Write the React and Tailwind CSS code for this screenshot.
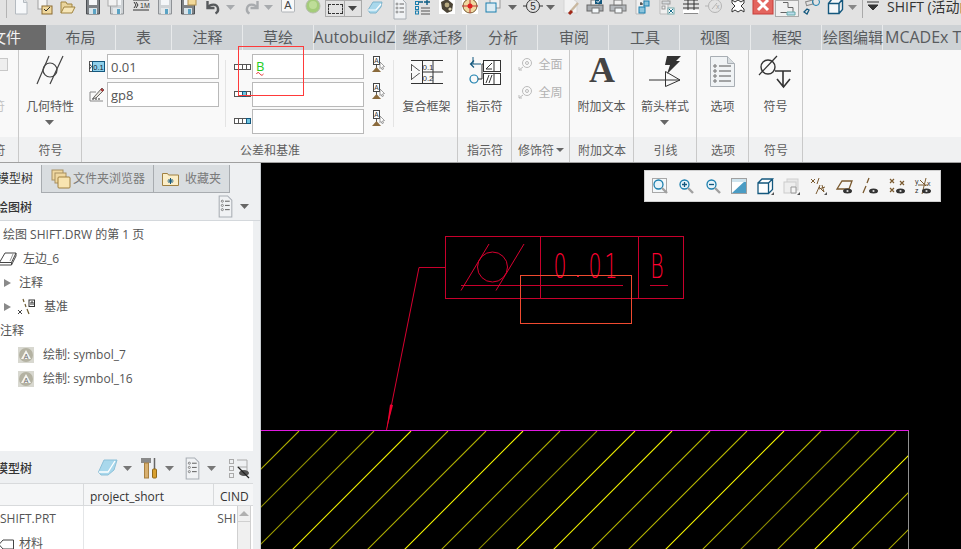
import React from "react";

const S = ({ w = 16, h = 16, vb, className = "", children }) => (
  <svg width={w} height={h} viewBox={vb || `0 0 ${w} ${h}`} className={`block shrink-0 overflow-visible ${className}`}>{children}</svg>
);

const Arrow = ({ c = "#777", className = "" }) => (
  <S className={className}><path d="M3 5h9l-4.500 5z" fill={c} /></S>
);
const DocI = () => <S><path d="M2.500-1h8l3.500 3.500V14h-11.500z" fill="#f6f8fa" stroke="#b4bac0" /><path d="M10.500-1v3.500h3.500" fill="#dfe3e6" stroke="#b4bac0" /></S>;
const Floppy = ({ faded, extra }) => (
  <S>
    <path d="M1.500-1h13v15h-13z" fill={faded ? "#cfd3d6" : "#7e8286"} stroke={faded ? "#8e9296" : "#4c5054"} />
    <rect x="4" y="-1" width="8" height="6" fill="#f4f6f8" />
    <rect x="4" y="8" width="8" height="6" fill={faded ? "#e4e8ea" : "#d8e4ea"} />
    <rect x="8" y="9" width="3" height="5" fill="#5ba3c4" />
    {extra}
  </S>
);
const UndoI = ({ c = "#56595c" }) => <S><path d="M2.500 1v7h7M3 7.500c2-3.500 9-4.500 10 1 .4 2-.6 4-2.500 5" fill="none" stroke={c} strokeWidth="2.400" /></S>;
const RedoI = () => <S><g transform="matrix(-1 0 0 1 16 0)"><path d="M2.500 1v7h7M3 7.500c2-3.500 9-4.500 10 1 .4 2-.6 4-2.500 5" fill="none" stroke="#a8abae" strokeWidth="2.400" /></g></S>;
const Eraser = () => <S><path d="M1 10 6 2h9l-1 5-5 6H3z" fill="#a9d8ec" stroke="#7fb4cc" /><path d="M1 10h8l5-6" fill="none" stroke="#fff" strokeWidth="1.200" /></S>;
const ListI = ({ big }) => (
  <S w={big ? 17 : 16} h={big ? 20 : 16} vb={big ? "0 0 16 19" : "0 0 16 16"}>
    <path d="M2-1h8l4 4v16h-12z" fill="#f0f2f4" stroke="#a8aeb4" />
    {[4, 8, 12].map((y) => (
      <g key={y}><circle cx="5" cy={y} r="1" fill="none" stroke="#666" strokeWidth=".7" /><path d={`M7.500 ${y}h4.500`} stroke="#666" /></g>
    ))}
  </S>
);
const BlueList = () => <S><g fill="none" stroke="#1b7fae"><rect x="1.500" y="1.500" width="3" height="3" /><rect x="1.500" y="6.500" width="3" height="3" /><rect x="1.500" y="11" width="3" height="3" /></g><path d="M7 8h9M7 11h9M7 14h9" stroke="#555" /><path d="M5 2h4M13 0v5M10 2h6" stroke="#0d5c84" strokeWidth="1.400" /></S>;
const Mech = () => <S><rect x="0" y="-1" width="16" height="15" fill="#fff" /><path d="M2 2l6-3 6 5-1 7-5 2-5-4z" fill="#4b4436" /><circle cx="8" cy="5" r="2.400" fill="#b8aa80" /><circle cx="11" cy="9" r="1.600" fill="#d8d0b0" /></S>;
const Target = () => <S><rect x="0" y="-1" width="16" height="15" fill="#fff" /><circle cx="8" cy="6" r="7" fill="#f0d8a0" stroke="#7a5a30" /><path d="M0 6h16M8-1v14" stroke="#c03030" /><circle cx="8" cy="6" r="2.500" fill="#e02020" /></S>;

const Q = ({ className = "", children }) => <div className={`w-4 h-4 shrink-0 ${className}`}>{children}</div>;

function QuickBar() {
  return (
    <div className="h-[25px] bg-[#e2e2e2] flex items-start pl-[13px] relative overflow-hidden shrink-0">
      <div className="absolute left-[6px] top-0 h-[18px] w-px bg-[#b4b4b4]" />
      <Q><DocI /></Q>
      <Q className="ml-[8px]"><S><rect x="1" y="-1" width="9" height="10" fill="#f4f4f4" stroke="#a0a0a0" /><rect x="5" y="6" width="10" height="8" fill="#f0d89c" stroke="#8a6a30" /><path d="M7 9l2 2 4-4" fill="none" stroke="#333" /></S></Q>
      <Q className="ml-[7px]"><S><path d="M1 13V2h5l1 2h5v3" fill="#e9d49c" stroke="#a08440" /><path d="M1 13l3-6h11l-3 6z" fill="#f6e6b8" stroke="#a08440" /></S></Q>
      <Q className="ml-[9px]"><Floppy /></Q>
      <Q className="ml-[8px]"><Floppy faded extra={<rect x="-1" y="-2" width="9" height="8" fill="#f2f2f2" stroke="#aaa" />} /></Q>
      <Q className="ml-[8px]"><S><path d="M0 0h16M0 10h16" stroke="#333" strokeWidth="1.200" /><path d="M1 2l2 3-2 3M3 2l2 3-2 3" fill="none" stroke="#333" /><text x="7" y="8" fontSize="7" fill="#333" fontFamily="Liberation Sans">1M</text></S></Q>
      <Q className="ml-[8px]"><Floppy faded /></Q>
      <Q className="ml-[7px]"><Floppy extra={<rect x="8" y="-3" width="8" height="8" fill="#f2d99a" stroke="#b09050" />} /></Q>
      <Q className="ml-[9px]"><UndoI /></Q>
      <Q className="ml-[2px]"><Arrow c="#a8abae" /></Q>
      <Q className="ml-[5px]"><RedoI /></Q>
      <Q className="ml-[1px]"><Arrow c="#a8abae" /></Q>
      <Q className="ml-[3px]"><S><rect x="1.500" y="-2" width="13" height="14" rx="1" fill="#f8f8f8" stroke="#b0b4b8" /><text x="8" y="9" textAnchor="middle" fontSize="11" fill="#444" fontFamily="Liberation Sans">A</text></S></Q>
      <Q className="ml-[9px]"><S><circle cx="8" cy="6" r="7" fill="#a4cc7a" stroke="#b4bdaa" /><circle cx="8" cy="5" r="4" fill="#bedd98" /></S></Q>
      <div className="ml-[4px] w-[37px] h-[17px] border border-[#aaaaaa] flex shrink-0">
        <div className="w-[23px] border-r border-[#aaaaaa] flex items-center justify-center">
          <div className="w-[15px] h-[10px] border border-dashed border-[#333333]" />
        </div>
        <div className="flex-1 flex items-center justify-center"><Arrow c="#444" /></div>
      </div>
      <Q className="ml-[5px]"><Eraser /></Q>
      <Q className="ml-[9px]"><ListI /></Q>
      <Q className="ml-[6px]"><BlueList /></Q>
      <Q className="ml-[9px]"><Mech /></Q>
      <Q className="ml-[7px]"><Target /></Q>
      <Q className="ml-[7px]"><S><rect x="5" y="-1" width="10" height="9" fill="#eee" stroke="#999" /><rect x="1" y="3" width="10" height="9" fill="#dcebf2" stroke="#1b7fae" /></S></Q>
      <Q className="ml-[4px]"><Arrow c="#666" /></Q>
      <Q className="ml-[4px]"><S><circle cx="8" cy="6" r="6.500" fill="none" stroke="#333" /><path d="M-2 6h3M15 6h3" stroke="#333" /><text x="8" y="9.500" textAnchor="middle" fontSize="10" fill="#333" fontFamily="Liberation Sans">5</text></S></Q>
      <Q className="ml-[2px]"><Arrow c="#666" /></Q>
      <Q className="ml-[4px]"><S><path d="M1-1h9l4 3v11H1z" fill="#f2f2f2" stroke="#d4d4d4" /><path d="M7 12l8-9" stroke="#c9b8a0" strokeWidth="2.400" /><path d="M6 14l3-3" stroke="#a02818" strokeWidth="3" /></S></Q>
      <Q className="ml-[8px]"><S><rect x="0" y="5" width="16" height="6" fill="#a8acb0" stroke="#666" /><rect x="4" y="0" width="8" height="5" fill="#f0f0f0" stroke="#777" /><rect x="5" y="8" width="7" height="5" fill="#f4f8fa" stroke="#777" /><rect x="8" y="-2" width="7" height="6" fill="#14587e" /><path d="M9.500 1l1.500 1.500 2.500-3" fill="none" stroke="#fff" /></S></Q>
      <Q className="ml-[7px]"><S><rect x="0" y="5" width="16" height="6" fill="#b4b8bc" stroke="#777" /><rect x="4" y="0" width="8" height="5" fill="#f0f0f0" stroke="#777" /><rect x="5" y="8" width="7" height="5" fill="#f4f8fa" stroke="#777" /></S></Q>
      <Q className="ml-[9px]"><S><path d="M1-1h8v15H1z" fill="#f0f0f0" stroke="#bbb" /><rect x="9" y="1" width="5" height="5" fill="#8cc4dc" stroke="#1b7fae" /><rect x="4" y="7" width="6" height="6" fill="#8cc4dc" stroke="#1b7fae" /><path d="M5 4h3M6 2v3" stroke="#222" /></S></Q>
      <Q className="ml-[8px]"><S><path d="M1-1h8v15H1z" fill="#f0f0f0" stroke="#bbb" /><rect x="3" y="1" width="8" height="3" fill="#d8dcdf" stroke="#999" /><rect x="3" y="6" width="3" height="3" fill="none" stroke="#999" /><rect x="9" y="8" width="6" height="6" fill="#fff" stroke="#7aa" /><path d="M10 9l4 4M14 9l-4 4" stroke="#1b6f8e" /></S></Q>
      <Q className="ml-[8px]"><S><path d="M1 0h14M1 13h14M0 4h16M0 8h16" stroke="#333" /><path d="M5-1v11M11-1v11" stroke="#333" /><rect x="0" y="10" width="16" height="3" fill="#fff" /></S></Q>
      <Q className="ml-[8px]"><S><circle cx="8" cy="6" r="6.500" fill="none" stroke="#b4b4b4" /><path d="M-2 6h3M5 9l5-6" stroke="#b4b4b4" /><text x="9" y="9" fontSize="7" fill="#aaa" fontFamily="Liberation Sans">x</text></S></Q>
      <Q className="ml-[7px]"><S><path d="M2 0l3 2 3-2 3 2 3-2v3l-3 3 3 3v3l-3-2-3 2-3-2-3 2V9l3-3-3-3z" fill="#fff" stroke="#333" /></S></Q>
      <Q className="ml-[9px]"><S><rect x="-2" y="-3" width="20" height="17" fill="#e3655e" stroke="#c83c38" /><path d="M3 0l10 10M13 0L3 10" stroke="#fff" strokeWidth="3" /></S></Q>
      <div className="ml-[4px] w-[24px] h-[17px] border border-[#aaaaaa] bg-[#f0f0f0] shrink-0 flex items-center justify-center">
        <S w={17} h={14}><path d="M4 .5h5v5h5v5H1.500" fill="none" stroke="#666" /><path d="M8 10h8v3H8z" fill="#bcdcec" stroke="#6aa" /></S>
      </div>
      <Q className="ml-[5px]"><S><rect x="2" y="1" width="7" height="4" fill="none" stroke="#888" transform="rotate(-15 5 3)" /><circle cx="12" cy="2" r="3.500" fill="none" stroke="#1b7fae" /><path d="M0 12l3-3 2 1-2 4z" fill="none" stroke="#14587e" strokeWidth="1.300" /></S></Q>
      <Q className="ml-[7px]"><S w={17} h={16}><path d="M1.500 3.500H12v10H1.500zM1.500 3.500 5-1h10.500L12 3.500M12 13.500l3.500-4V-1" fill="#f4f8fa" stroke="#14587e" strokeWidth="1.400" /></S></Q>
      <Q className="ml-[2px]"><Arrow c="#888" /></Q>
      <div className="ml-[1px] mt-0 h-[18px] w-px bg-[#aaaaaa] shrink-0" />
      <Q className="ml-[2px]"><S><path d="M2 2h12M3 5h10l-5 5z" fill="#333" stroke="#333" /></S></Q>
      <span className="ml-[6px] text-[14px] leading-[13px] text-[#333333] whitespace-nowrap">SHIFT (活动的)</span>
    </div>
  );
}

const TABS = [
  ["布局", "w-[70px]", ""], ["表", "w-[56px]", ""], ["注释", "w-[71px]", "pl-px"], ["草绘", "w-[71px]", ""],
  ["AutobuildZ", "w-[82px]", "text-[16px]"], ["继承迁移", "w-[71px]", "pl-[3px]"], ["分析", "w-[71px]", "pl-[2px]"], ["审阅", "w-[71px]", "pl-[2px]"],
  ["工具", "w-[71px]", "pl-[2px]"], ["视图", "w-[71px]", ""], ["框架", "w-[71px]", "pl-[2px]"], ["绘图编辑", "w-[61px]", "pl-[2px]"],
];

function Tabs() {
  return (
    <div className="h-[25px] bg-[#ced2d5] flex shrink-0 overflow-hidden whitespace-nowrap text-[15px] leading-[24px] text-[#585b5e]">
      <div className="w-[46px] bg-[#6b6b6b] text-[#f4f4f4] pl-[21px] shrink-0 flex justify-end pr-[25px]"><span>文件</span></div>
      {TABS.map(([t, w, p]) => (
        <div key={t} className={`${w} ${p} shrink-0 flex justify-center border-r border-[#e8eaeb]`}><span className="shrink-0">{t}</span></div>
      ))}
      <div className="pl-[2px] text-[16px] shrink-0">MCADEx Toolkit</div>
    </div>
  );
}

const Group = ({ w, label, caret, children }) => (
  <div className={`${w} shrink-0 flex flex-col border-r border-[#c9c9c9] overflow-hidden`}>
    <div className="h-[87px] relative flex flex-col items-center">{children}</div>
    <div className="h-[25px] pt-[2px] pl-px bg-[#f0f1f2] flex items-center justify-center text-[12px] text-[#5e5e5e] whitespace-nowrap">
      {label}
      {caret && <span className="ml-[2px] mt-[-2px] w-0 h-0 border-x-[4px] border-x-transparent border-t-[4px] border-t-[#666666]" />}
    </div>
  </div>
);

const BigBtn = ({ icon, text, caret }) => (
  <>
    <div className="h-[48px] w-full flex items-start justify-center pt-[6px] shrink-0">{icon}</div>
    <div className="h-[17px] leading-[17px] text-[12px] text-[#555555] whitespace-nowrap">{text}</div>
    {caret && <Arrow c="#666" />}
  </>
);

const Field = ({ children, w = "w-[112px]" }) => (
  <div className={`${w} h-[25px] bg-white border border-[#b9b9b9] px-[3px] text-[13px] leading-[24px] text-[#555555] relative shrink-0`}>{children}</div>
);

const Seg = ({ hi }) => (
  <S w={16} h={7}>
    {[0, 1, 2, 3].map((i) => (
      <rect key={i} x={i * 4 + 0.5} y="0.500" width="4" height="5" fill={i === hi ? "#6ec4e0" : "#fff"} stroke={i === hi ? "#14587e" : "#555"} />
    ))}
  </S>
);

const DatumPick = () => (
  <S w={13} h={17} className="ml-[8px] mb-[6px]">
    <rect x="1.500" y=".5" width="6" height="8" fill="#fff" stroke="#444" />
    <text x="4.500" y="7" fontSize="6.500" textAnchor="middle" fill="#333" fontFamily="Liberation Sans">A</text>
    <path d="M4.500 9v3" stroke="#555" />
    <path d="M4.500 11 9 16H0z" fill="#8a6a3c" />
    <path d="M8 6l4.500 4.500-2 .5 1 2-1.500.5-1-2L8 12.500z" fill="#fff" stroke="#777" strokeWidth=".7" />
  </S>
);

const Tolerance = () => (
  <div className="absolute inset-0 flex items-start">
    <div className="w-[143px] pl-[7px] pt-[4px] flex flex-col gap-[3px] shrink-0">
      <div className="flex items-center gap-[2px]">
        <S w={16} h={11}>
          <rect x=".5" y=".5" width="15" height="10" fill="#fff" stroke="#555" />
          <rect x="3.500" y=".5" width="12" height="10" fill="#8fd0ea" stroke="#14587e" />
          <path d="M.5 3l2 2.500-2 2.500" fill="none" stroke="#333" />
          <text x="9.500" y="8.500" fontSize="7.500" textAnchor="middle" fill="#123" fontFamily="Liberation Sans">0.1</text>
        </S>
        <Field>0.01</Field>
      </div>
      <div className="flex items-center gap-[2px]">
        <S w={16} h={15}>
          <path d="M1 14V5h6M1 14h13" fill="none" stroke="#888" />
          <path d="M3 12h9" stroke="#333" strokeDasharray="2 1" />
          <path d="M5 10 13 1l2 2-8 8-3 .5z" fill="#e8e4dc" stroke="#666" />
          <path d="M12 2l2 2" stroke="#b03030" strokeWidth="2" />
        </S>
        <Field>gp8</Field>
      </div>
    </div>
    <div className="w-px h-[67px] bg-[#e4e4e4] mt-[10px] shrink-0" />
    <div className="w-[168px] pl-[8px] pt-[4px] flex flex-col gap-[2px] shrink-0">
      {[0, 2, 3].map((hi, i) => (
        <div key={i} className="flex items-center">
          <Seg hi={i === 0 ? -1 : hi} />
          <div className={i === 0 ? "ml-[2px] mb-[1px]" : "ml-[2px]"}>
            <Field>
              {i === 0 && (
                <span className="relative block text-[#22cc22] text-[13px] mt-[-1px]">
                  B
                  <svg width="8" height="4" className="absolute left-0 top-[18px]"><path d="M.5 2c1-2 2-2 3.500 0s2.500 1 3.500 0" fill="none" stroke="#e02020" /></svg>
                </span>
              )}
            </Field>
          </div>
          <DatumPick />
        </div>
      ))}
    </div>
    <div className="w-px h-[67px] bg-[#e4e4e4] mt-[10px] ml-[-1px] shrink-0" />
    <div className="flex-1 flex flex-col items-center pl-[2px]">
      <div className="h-[48px] w-full flex items-start justify-center pt-[10px]">
        <S w={32} h={24}>
          <path d="M0 .5h32M0 23.500h32M0 12h32" stroke="#333" fill="none" />
          <path d="M11.500 0v24M22 0v24" stroke="#333" />
          <path d="M.5 4v16M1 5l9 7-9 7" fill="none" stroke="#555" />
          <rect x="0" y="11" width="11" height="2" fill="#f9f9f9" />
          <text x="17" y="10" fontSize="8" textAnchor="middle" fill="#333" fontFamily="Liberation Sans">0.1</text>
          <text x="17" y="21" fontSize="8" textAnchor="middle" fill="#333" fontFamily="Liberation Sans">0.2</text>
        </S>
      </div>
      <div className="h-[17px] leading-[17px] text-[12px] text-[#555555] whitespace-nowrap">复合框架</div>
    </div>
  </div>
);

const Modifier = ({ t, top }) => (
  <div className={`flex items-center gap-[6px] ${top}`}>
    <S w={14} h={14}>
      <circle cx="9" cy="6" r="4.500" fill="none" stroke="#bbb" />
      <circle cx="9" cy="6" r="1.500" fill="none" stroke="#bbb" />
      <path d="M5 10l-4 3M1 10v3h3" fill="none" stroke="#bbb" />
    </S>
    <span className="text-[12px] text-[#b2b2b2] leading-none pt-[1px]">{t}</span>
  </div>
);

function Ribbon() {
  return (
    <div className="h-[112px] bg-[#f9f9f9] flex shrink-0 text-[12px] overflow-hidden">
      <Group w="w-[19px]" label={<span className="ml-[-44px]">注释符</span>}>
        <div className="absolute left-[-8px] top-[8px] w-4 h-[13px] border border-[#c8c8c8] bg-[#eeeeee]" />
        <span className="absolute left-[-19px] top-[48px] text-[#c2c2c2] text-[12px] whitespace-nowrap">符符</span>
      </Group>
      <Group w="w-[63px]" label="符号">
        <BigBtn
          text="几何特性"
          caret
          icon={
            <S w={28} h={28}>
              <circle cx="14" cy="14" r="7" fill="none" stroke="#444" strokeWidth="1.200" />
              <path d="M1 28 13 0M14 28 27 0" stroke="#444" strokeWidth="1.200" />
            </S>
          }
        />
      </Group>
      <Group w="w-[376px]" label="公差和基准">
        <Tolerance />
      </Group>
      <Group w="w-[54px]" label="指示符">
        <BigBtn
          text="指示符"
          icon={
            <S w={32} h={29} className="mt-[1px]">
              <path d="M12 7H2M5 3.500 1.500 7 5 10.500" fill="none" stroke="#14587e" strokeWidth="1.200" />
              <path d="M4 7V0" stroke="#14587e" />
              <circle cx="5" cy="22" r="4" fill="none" stroke="#1b7fae" strokeWidth="1.200" />
              <path d="M9 22h4V7h6" fill="none" stroke="#333" />
              <rect x="14.500" y="3.500" width="17" height="11" fill="#fff" stroke="#333" />
              <path d="M25 3.500v11M17 12l6-6M17 12h6" fill="none" stroke="#333" />
              <rect x="14.500" y="16.500" width="17" height="11" fill="#fff" stroke="#333" />
              <path d="M25 16.500v11M17 26l3-8M20 26l3-8" fill="none" stroke="#333" />
            </S>
          }
        />
      </Group>
      <Group w="w-[58px]" label="修饰符" caret>
        <Modifier t="全面" top="mt-[7px]" />
        <Modifier t="全周" top="mt-[14px]" />
      </Group>
      <Group w="w-[64px]" label="附加文本">
        <div className="h-[48px] w-full flex justify-center pl-px">
          <span className="font-['Liberation_Serif',serif] font-bold text-[36px] leading-[40px] text-[#444444]">A</span>
        </div>
        <div className="h-[17px] leading-[17px] text-[12px] text-[#555555] whitespace-nowrap">附加文本</div>
      </Group>
      <Group w="w-[63px]" label="引线">
        <BigBtn
          text="箭头样式"
          caret
          icon={
            <S w={32} h={32}>
              <path d="M18 0h14l-5 5h4L18 18l3-9h-5z" fill="#333" />
              <path d="M0 24h31" stroke="#333" />
              <path d="M16.500 15.500v15L31 24z" fill="none" stroke="#333" />
            </S>
          }
        />
      </Group>
      <Group w="w-[52px]" label="选项">
        <BigBtn
          text="选项"
          icon={
            <S w={25} h={31}>
              <path d="M.5.500h17l7 7v23H.5z" fill="#f0f3f5" stroke="#a8aeb4" />
              <path d="M17.500.500v7h7" fill="#d8dde0" stroke="#a8aeb4" />
              {[10, 15, 20, 25].map((y) => (
                <g key={y}><circle cx="5" cy={y} r="1.200" fill="none" stroke="#666" /><path d={`M9 ${y}h12`} stroke="#555" /></g>
              ))}
            </S>
          }
        />
      </Group>
      <Group w="w-[54px]" label="符号">
        <BigBtn
          text="符号"
          icon={
            <S w={33} h={32}>
              <circle cx="9" cy="11" r="7" fill="none" stroke="#333" strokeWidth="1.400" />
              <path d="M0 19 18 0" stroke="#333" strokeWidth="1.200" />
              <path d="M16 15h16M24 15v16M18 23l6.500 8 6.500-8" fill="none" stroke="#333" strokeWidth="1.600" />
            </S>
          }
        />
      </Group>
      <div className="flex-1 flex flex-col">
        <div className="h-[87px]" />
        <div className="h-[25px] bg-[#f0f1f2]" />
      </div>
    </div>
  );
}

const NoteI = () => (
  <S w={16} h={16}>
    <rect width="16" height="16" fill="#d8d8d0" />
    <circle cx="8" cy="8" r="7" fill="#b4b2a2" />
    <path d="M3 12 8 3l5 9z" fill="#f4f4f0" />
    <text x="8" y="12" fontSize="7" textAnchor="middle" fill="#666" fontFamily="Liberation Sans">A</text>
  </S>
);

const Tri = () => <div className="w-0 h-0 border-y-[4.500px] border-y-transparent border-l-[7px] border-l-[#8a8a8a] shrink-0" />;

const Row = ({ className = "", children }) => (
  <div className={`h-6 pt-[3px] flex items-center text-[12px] text-[#555555] whitespace-nowrap shrink-0 ${className}`}>{children}</div>
);

function Sidebar() {
  return (
    <div className="w-[261px] shrink-0 bg-[#eef0f2] border-r border-[#c8ccd0] flex flex-col overflow-hidden">
      <div className="h-[30px] pt-[2px] flex shrink-0 text-[12px] text-[#7a7a7a] border-b-0">
        <div className="w-[42px] shrink-0 bg-[#eef0f2] border-r border-[#a8acb0] flex items-center justify-end pr-[8px] text-[#333333]"><span className="shrink-0">模型树</span></div>
        <div className="w-[112px] shrink-0 bg-[#d9dde0] border-r border-b border-[#a8acb0] flex items-center pl-[9px] gap-[2px]">
          <S w={20} h={20}>
            <rect x="1" y="1" width="11" height="10" fill="#f0d8a0" stroke="#a89060" />
            <rect x="4" y="4" width="11" height="10" fill="#f0d8a0" stroke="#a89060" />
            <rect x="7" y="8" width="12" height="11" rx="1" fill="#f8e4b0" stroke="#a08040" />
          </S>
          <span>文件夹浏览器</span>
        </div>
        <div className="w-[76px] shrink-0 bg-[#d9dde0] border-r border-b border-[#a8acb0] flex items-center pl-[8px] gap-[6px]">
          <S w={17} h={15}>
            <path d="M.5 14.500V2.500h5l1 1.500h10v10.500z" fill="#fbeec8" stroke="#a08040" />
            <path d="M8.500 7v6M5.500 10h6M6.500 8l4 4M10.500 8l-4 4" stroke="#14587e" />
          </S>
          <span>收藏夹</span>
        </div>
        <div className="flex-1 border-b border-transparent" />
      </div>
      <div className="h-[28px] pt-[3px] shrink-0 flex items-center border-b border-[#d4d8dc] text-[12px] text-[#333333] relative">
        <span className="ml-[-4px] font-medium">绘图树</span>
        <div className="absolute left-[217px] top-[4px]"><ListI big /></div>
        <div className="absolute left-[237px] top-[6px]"><Arrow c="#666" /></div>
      </div>
      <div className="h-[230px] shrink-0 flex flex-col w-[253px] bg-white overflow-hidden">
        <Row className="pl-[3px]">绘图 SHIFT.DRW 的第 1 页</Row>
        <Row>
          <S w={18} h={14} className="ml-[-1px] mr-[6px]">
            <path d="M.5 10.500 6 1h11l-4.500 9.500zM.5 10.500V13h12l4.500-9V1M12.500 10.500V13" fill="none" stroke="#444" />
            <path d="M14 2l-3 7" stroke="#999" />
          </S>
          左边_6
        </Row>
        <Row className="pl-[4px]"><Tri /><span className="ml-[8px]">注释</span></Row>
        <Row className="pl-[4px]">
          <Tri />
          <S w={17} h={16} className="ml-[7px] mr-[9px]">
            <path d="M5 0l1 3M7 5l1 3M9 10l2 5" stroke="#6b5a30" strokeWidth="1.200" />
            <path d="M0 11l4 4M4 11l-4 4" stroke="#444" />
            <rect x="11" y="1" width="5.500" height="6.500" fill="#fff" stroke="#333" />
            <path d="M13 6V3h2v3" fill="none" stroke="#333" />
          </S>
          基准
        </Row>
        <Row className="pl-0">注释</Row>
        <Row className="pl-[18px]"><NoteI /><span className="ml-[9px]">绘制: symbol_7</span></Row>
        <Row className="pl-[18px]"><NoteI /><span className="ml-[9px]">绘制: symbol_16</span></Row>
      </div>
      <div className="h-[32px] pt-[3px] shrink-0 flex items-center relative text-[12px] text-[#333333]">
        <span className="ml-[-4px] font-medium">模型树</span>
        <div className="absolute left-[98px] top-[8px]"><S w={20} h={17}><path d="M.5 13 6 1h13l-3 10-6 5H3z" fill="#a9d8ec" stroke="#8cc0d8" /><path d="M1 13h9l7-11" fill="none" stroke="#fff" strokeWidth="1.300" /></S></div>
        <div className="absolute left-[120px] top-[10px]"><Arrow c="#777" /></div>
        <div className="absolute left-[141px] top-[7px]">
          <S w={17} h={21}>
            <path d="M0 0h10v5H0z" fill="#8a8a8a" />
            <rect x="3.500" y="5" width="4" height="15" fill="#d8b070" stroke="#a88040" />
            <path d="M13.500 0v11" stroke="#666" strokeWidth="1.500" />
            <rect x="11.500" y="11" width="4" height="9" rx="1" fill="#d8a030" stroke="#906818" />
          </S>
        </div>
        <div className="absolute left-[162px] top-[10px]"><Arrow c="#777" /></div>
        <div className="absolute left-[184px] top-[8px]"><ListI big /></div>
        <div className="absolute left-[204px] top-[10px]"><Arrow c="#777" /></div>
        <div className="absolute left-[229px] top-[8px]">
          <S w={20} h={20}>
            <g fill="none" stroke="#aaa"><rect x=".5" y=".5" width="4" height="4" /><rect x=".5" y="7.500" width="4" height="4" /><rect x=".5" y="14.500" width="4" height="4" /><path d="M8 1h10M8 8h10M18 1v12" /></g>
            <ellipse cx="15" cy="14" rx="5" ry="3" fill="#555" />
            <path d="M9 8l11 11" stroke="#222" strokeWidth="1.300" />
          </S>
        </div>
      </div>
      <div className="h-[23px] shrink-0 w-[253px] bg-[#f5f6f7] border-y border-[#d8dadc] flex text-[12px] text-[#333333] whitespace-nowrap">
        <div className="w-[84px] border-r border-[#d8dadc] shrink-0" />
        <div className="w-[130px] border-r border-[#d8dadc] pl-[6px] leading-[25px] shrink-0">project_short</div>
        <div className="pl-[6px] leading-[25px] overflow-hidden">CIND</div>
      </div>
      <div className="flex-1 w-[253px] bg-white flex text-[12px] text-[#555555] whitespace-nowrap overflow-hidden">
        <div className="w-[84px] border-r border-[#e4e6e8] shrink-0 flex flex-col">
          <div className="h-[24px] leading-[26px]">SHIFT.PRT</div>
          <div className="flex items-center h-[24px] mt-[5px]">
            <S w={15} h={11} className="ml-[-1px] mr-[5px]"><path d="M0 5.500 4 1h10.500v9H4z" fill="#fff" stroke="#444" /></S>
            材料
          </div>
        </div>
        <div className="w-[129px] shrink-0" />
        <div className="w-[24px] shrink-0 text-right pr-px overflow-hidden leading-[26px]">SHI</div>
        <div className="w-[14px] shrink-0 ml-[0px] bg-[#f0f0f0] border-x border-[#d0d0d0] h-full">
          <div className="h-[16px] flex items-center justify-center border-b border-[#d0d0d0]"><span className="w-0 h-0 border-x-[5px] border-x-transparent border-b-[5px] border-b-[#b0b0b0]" /></div>
        </div>
      </div>
    </div>
  );
}

const MAG = () => (
  <>
    <circle cx="6.500" cy="6.500" r="4.500" fill="#e8f4fa" stroke="#1b7fae" strokeWidth="1.300" />
    <path d="M10 10l5 5" stroke="#a0a0a0" strokeWidth="2.400" />
  </>
);

const EYE = () => (
  <g>
    <ellipse cx="11.500" cy="13" rx="4.500" ry="2.500" fill="#333" />
    <circle cx="11.500" cy="13" r="1.100" fill="#ddd" />
  </g>
);
const Corner = () => <path d="M17 17h-3l3-3z" fill="#555" />;

function FloatBar() {
  const cls = "ml-[10.300px] shrink-0";
  return (
    <div className="absolute left-[383px] top-[7px] w-[297px] h-[32px] bg-[#f5f5f5] border border-[#cfcfcf] flex items-center pl-[7px]">
      <S className="shrink-0"><rect x=".5" y=".5" width="14" height="14" fill="#f4f8fa" stroke="#a8a8a8" /><MAG /></S>
      <S className={cls}><MAG /><path d="M4 6.500h5M6.500 4v5" stroke="#14587e" strokeWidth="1.300" /></S>
      <S className={cls}><MAG /><path d="M4 6.500h5" stroke="#14587e" strokeWidth="1.300" /></S>
      <S className={cls}><rect x=".5" y=".5" width="15" height="15" fill="#fff" stroke="#a0a0a0" /><path d="M1 15 15 2v13z" fill="#4a9cc4" /><path d="M1 1h14v3H1z" fill="#cfe4ee" /></S>
      <S className={cls}><path d="M1 5h10.500v10.500H1zM1 5l4-4h10.500L11.500 5M11.500 15.500l4-4V1" fill="#fff" stroke="#14587e" strokeWidth="1.300" /><Corner /></S>
      <S className={cls}><rect x="4" y="1" width="11" height="11" fill="#e8e8e8" stroke="#d0d0d0" /><rect x="1" y="4" width="12" height="11" fill="#eee" stroke="#ccc" /><path d="M8 9h5v6H8z" fill="#f4f4f4" stroke="#999" /><Corner /></S>
      <S className={cls}><g stroke="#7a5a30" fill="none"><path d="M1 1l4 4M5 1L1 5M9 0 7 6M10 7 6 16M12 7l2 7M9 11l6-2M9 9l5 5" /></g><Corner /></S>
      <S className={cls}><path d="M1 11 6 3h10l-3 8z" fill="none" stroke="#7a5a30" strokeWidth="1.300" /><EYE /></S>
      <S className={cls}><path d="M7 0 5 5M4 8l-3 7" stroke="#7a5a30" strokeWidth="1.300" /><EYE /></S>
      <S className={cls}><path d="M1 1l4 4M5 1L1 5M11 3l4 4M15 3l-4 4M1 10l4 4M5 10l-4 4" stroke="#7a5a30" strokeWidth="1.200" /><EYE /></S>
      <S className={cls}><path d="M11 0 7 16M3 7l10 0M5 2l6 6" stroke="#7a5a30" /><text x="0" y="6" fontSize="7" fill="#333" fontFamily="Liberation Sans">y</text><text x="0" y="15" fontSize="7" fill="#333" fontFamily="Liberation Sans">z</text><text x="12" y="8" fontSize="7" fill="#333" fontFamily="Liberation Sans">x</text><EYE /></S>
    </div>
  );
}

const HATCH = [
  [299, "#b0b000"], [337, "#909000"], [374, "#a0a000"], [411, "#f0f000"], [448, "#b0b000"], [486, "#b0b000"],
  [523, "#f8f800"], [560, "#b0b000"], [597, "#909000"], [635, "#e8e800"], [672, "#f0f000"], [710, "#b8b800"],
  [747, "#b8b800"], [784, "#f8f800"], [821, "#b8b800"], [859, "#909000"], [896, "#a8a800"], [933, "#f8f800"],
  [970, "#b8b800"], [1007, "#a8a800"],
];

const RED = "#c8002c";
const Glyph = ({ x, t }) => (
  <text x={0} y={0} transform={`translate(${x} 278) scale(0.62 1)`} textAnchor="middle" fontSize="33" fontWeight="200" fill="#ff0030" fontFamily="DejaVu Sans">{t}</text>
);

function Drawing() {
  return (
    <svg width="700" height="386" viewBox="261 163 700 386" className="absolute inset-0 block">
      <defs>
        <clipPath id="hatch"><rect x="261" y="431" width="647" height="118" /></clipPath>
      </defs>
      <g clipPath="url(#hatch)">
        {HATCH.map(([x, c]) => (
          <line key={x} x1={x} y1="431" x2={x - 300} y2="731" stroke={c} strokeWidth="1.100" />
        ))}
      </g>
      <path d="M261 430.500H908.500" stroke="#e018e0" shapeRendering="crispEdges" />
      <path d="M908.500 431V549" stroke="#909090" shapeRendering="crispEdges" />
      <g fill="none" stroke={RED} shapeRendering="crispEdges">
        <rect x="445.500" y="236.500" width="238" height="62" />
        <path d="M540.500 236.500v62M638.500 236.500v62" />
        <path d="M461 285.500h162M650 285.500h18" />
        <path d="M445 267.500h-26.500" />
      </g>
      <g fill="none" stroke="#d80030">
        <circle cx="492.500" cy="267" r="15" />
        <path d="M461 290.500 489 244M496 290.500 524 244" />
        <path d="M419 267.500 386.500 430" />
      </g>
      <path d="M386.500 430 390 404.500 393 405z" fill="#f00030" />
      <Glyph x={560} t="0" />
      <rect x="577" y="275" width="2" height="2" fill="#f00030" />
      <Glyph x={595} t="0" />
      <Glyph x={611} t="1" />
      <Glyph x={657} t="B" />
      <rect x="520.500" y="275.500" width="111" height="48" fill="none" stroke="#f04a30" shapeRendering="crispEdges" />
    </svg>
  );
}

export default function App() {
  return (
    <div className="w-[961px] h-[549px] relative overflow-hidden flex flex-col bg-black font-['Open_Sans','Noto_Sans_CJK_SC',sans-serif]">
      <QuickBar />
      <Tabs />
      <Ribbon />
      <div className="h-px bg-[#a0a0a0] shrink-0" />
      <div className="flex-1 flex min-h-0">
        <Sidebar />
        <div className="flex-1 relative bg-black overflow-hidden">
          <Drawing />
          <FloatBar />
        </div>
      </div>
      <div className="absolute left-[238px] top-[46px] w-[66px] h-[50px] border border-[#ff3a3a]" />
    </div>
  );
}
